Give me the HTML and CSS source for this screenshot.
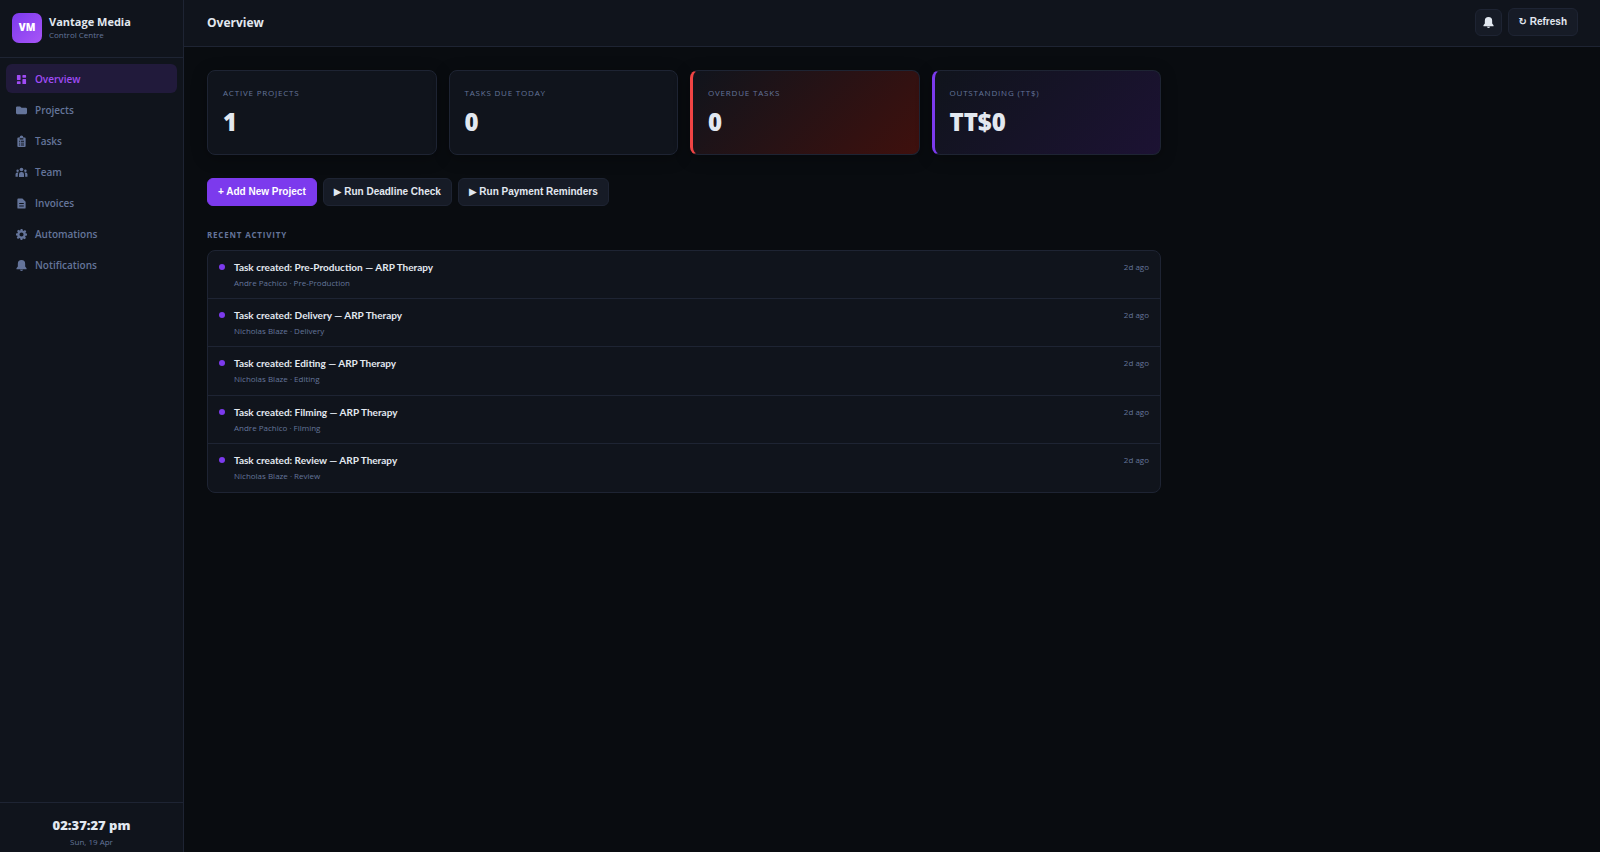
FILE: index.html
```html
<!DOCTYPE html>
<html lang="en">
<head>
<meta charset="utf-8">
<meta name="viewport" content="width=device-width, initial-scale=1">
<title>Vantage Media – Control Centre</title>
<link rel="stylesheet" href="styles.css">
</head>
<body>
<div class="app">
  <aside class="sidebar">
    <div class="brand">
      <div class="brand-logo">VM</div>
      <div class="brand-text">
        <div class="brand-name">Vantage Media</div>
        <div class="brand-sub">Control Centre</div>
      </div>
    </div>
    <nav class="nav">
      <a class="nav-item active" href="#overview"><svg class="icon" viewBox="0 0 24 24"><path d="M3 2h6a1 1 0 0 1 1 1v9a1 1 0 0 1-1 1H3a1 1 0 0 1-1-1V3a1 1 0 0 1 1-1zM15 2h6a1 1 0 0 1 1 1v4a1 1 0 0 1-1 1h-6a1 1 0 0 1-1-1V3a1 1 0 0 1 1-1zM15 11h6a1 1 0 0 1 1 1v9a1 1 0 0 1-1 1h-6a1 1 0 0 1-1-1v-9a1 1 0 0 1 1-1zM3 16h6a1 1 0 0 1 1 1v4a1 1 0 0 1-1 1H3a1 1 0 0 1-1-1v-4a1 1 0 0 1 1-1z"/></svg>Overview</a>
      <a class="nav-item" href="#projects"><svg class="icon" viewBox="0 0 24 24"><path d="M2.500 3H9l3 3h9.500A2.500 2.500 0 0 1 24 8.500v9a2.500 2.500 0 0 1-2.500 2.500h-19A2.500 2.500 0 0 1 0 17.500v-12A2.500 2.500 0 0 1 2.500 3z"/></svg>Projects</a>
      <a class="nav-item" href="#tasks"><svg class="icon" viewBox="0 0 24 24"><path fill-rule="evenodd" d="M5 3h3a4 4 0 0 1 8 0h3a2 2 0 0 1 2 2v17a2 2 0 0 1-2 2H5a2 2 0 0 1-2-2V5a2 2 0 0 1 2-2zM8 5v2.500h8V5zM6.500 10.500v2h2v-2zM10.500 10.500v2h7v-2zM6.500 14.500v2h2v-2zM10.500 14.500v2h7v-2zM6.500 18.500v2h2v-2zM10.500 18.500v2h7v-2z"/></svg>Tasks</a>
      <a class="nav-item" href="#team"><svg class="icon" viewBox="0 0 24 24"><circle cx="12" cy="5.500" r="4"/><circle cx="3.500" cy="8" r="2.700"/><circle cx="20.500" cy="8" r="2.700"/><path d="M6.500 22v-6a5 5 0 0 1 5-5h1a5 5 0 0 1 5 5v6zM-1 21v-5a4 4 0 0 1 4-4h2.500q-1.500 2-1.500 4v5zM25 21v-5a4 4 0 0 0-4-4h-2.500q1.500 2 1.500 4v5z"/></svg>Team</a>
      <a class="nav-item" href="#invoices"><svg class="icon" viewBox="0 0 24 24"><path fill-rule="evenodd" d="M5 1h9l7 7v13a2 2 0 0 1-2 2H5a2 2 0 0 1-2-2V3a2 2 0 0 1 2-2zM7 11v2h10v-2zM7 16.500v2h10v-2z"/></svg>Invoices</a>
      <a class="nav-item" href="#automations"><svg class="icon" viewBox="0 0 24 24"><path fill-rule="evenodd" d="M10 0h4l.8 3.300 1.800.8 3-1.800 2.800 2.800-1.800 3 .8 1.800L24 10v4l-3.300.8-.8 1.800 1.800 3-2.800 2.800-3-1.800-1.800.8L14 24h-4l-.8-3.300-1.800-.8-3 1.800-2.800-2.800 1.800-3-.8-1.800L0 14v-4l3.300-.8.8-1.800-1.800-3 2.800-2.800 3 1.800 1.800-.8zM12 7.500a4.500 4.500 0 1 0 0 9 4.500 4.500 0 0 0 0-9z"/></svg>Automations</a>
      <a class="nav-item" href="#notifications"><svg class="icon" viewBox="0 0 24 24"><path d="M12 0a8 8 0 0 1 8 8v6l3 4v2H1v-2l3-4V8a8 8 0 0 1 8-8zM8.500 21.500h7a3.500 2.500 0 0 1-7 0z"/></svg>Notifications</a>
    </nav>
    <div class="clock">
      <div class="clock-time">02:37:27 pm</div>
      <div class="clock-date">Sun, 19 Apr</div>
    </div>
  </aside>
  <div class="main">
    <header class="topbar">
      <h1 class="page-title">Overview</h1>
      <div class="topbar-actions">
        <button class="icon-btn" type="button" aria-label="Notifications"><svg class="icon" viewBox="0 0 24 24"><path d="M12 0a8 8 0 0 1 8 8v6l3 4v2H1v-2l3-4V8a8 8 0 0 1 8-8zM8.500 21.500h7a3.500 2.500 0 0 1-7 0z"/></svg></button>
        <button class="btn" type="button">↻ Refresh</button>
      </div>
    </header>
    <main class="content">
      <section class="stats">
        <div class="card"><div class="card-label">Active Projects</div><div class="card-value">1</div></div>
        <div class="card"><div class="card-label">Tasks Due Today</div><div class="card-value">0</div></div>
        <div class="card card-danger"><div class="card-label">Overdue Tasks</div><div class="card-value">0</div></div>
        <div class="card card-accent"><div class="card-label">Outstanding (TT$)</div><div class="card-value">TT$0</div></div>
      </section>
      <div class="actions">
        <button class="btn btn-primary" type="button">+ Add New Project</button>
        <button class="btn" type="button">▶ Run Deadline Check</button>
        <button class="btn" type="button">▶ Run Payment Reminders</button>
      </div>
      <h2 class="section-title">Recent Activity</h2>
      <ul class="activity">
        <li class="activity-row"><span class="dot"></span><div class="activity-body"><div class="activity-title">Task created: Pre-Production — ARP Therapy</div><div class="activity-meta">Andre Pachico · Pre-Production</div></div><time class="activity-time">2d ago</time></li>
        <li class="activity-row"><span class="dot"></span><div class="activity-body"><div class="activity-title">Task created: Delivery — ARP Therapy</div><div class="activity-meta">Nicholas Blaze · Delivery</div></div><time class="activity-time">2d ago</time></li>
        <li class="activity-row"><span class="dot"></span><div class="activity-body"><div class="activity-title">Task created: Editing — ARP Therapy</div><div class="activity-meta">Nicholas Blaze · Editing</div></div><time class="activity-time">2d ago</time></li>
        <li class="activity-row"><span class="dot"></span><div class="activity-body"><div class="activity-title">Task created: Filming — ARP Therapy</div><div class="activity-meta">Andre Pachico · Filming</div></div><time class="activity-time">2d ago</time></li>
        <li class="activity-row"><span class="dot"></span><div class="activity-body"><div class="activity-title">Task created: Review — ARP Therapy</div><div class="activity-meta">Nicholas Blaze · Review</div></div><time class="activity-time">2d ago</time></li>
      </ul>
    </main>
  </div>
</div>
</body>
</html>
```
FILE: styles.css
```css
:root {
  --bg: #090c10;
  --surface: #10141c;
  --raised: #161b26;
  --border: #1e2433;
  --text: #e2e8f0;
  --muted: #64749a;
  --accent: #7c3aed;
  --accent-light: #a04bf5;
  --danger: #ef4444;
}

* { box-sizing: border-box; }

body {
  margin: 0;
  background: var(--bg);
  color: var(--text);
  font-family: "Open Sans", "Noto Sans", sans-serif;
  font-size: 11px;
  line-height: 16px;
}

.app { display: flex; min-height: 100vh; }

.icon { width: 11px; height: 11px; fill: currentColor; flex: none; overflow: visible; }

.sidebar {
  display: flex;
  flex-direction: column;
  flex: none;
  width: 184px;
  background: var(--surface);
  border-right: 1px solid var(--border);
}

.brand {
  display: flex;
  align-items: center;
  gap: 7px;
  padding: 13px 12px 14px;
  border-bottom: 1px solid var(--border);
}

.brand-logo {
  width: 30px;
  height: 30px;
  border-radius: 7px;
  background: linear-gradient(135deg, #7c3aed, #a855f7);
  color: #fff;
  font-size: 10px;
  font-weight: 800;
  line-height: 28px;
  text-align: center;
}

.brand-text { padding-bottom: 1px; }
.brand-name { font-size: 11px; font-weight: 700; line-height: 15px; }
.brand-sub { color: var(--muted); font-size: 8px; line-height: 12px; }

.nav {
  display: flex;
  flex: 1;
  flex-direction: column;
  gap: 2px;
  padding: 6px;
}

.nav-item {
  display: flex;
  align-items: center;
  gap: 8px;
  height: 29px;
  padding: 1px 10px 0;
  border-radius: 6px;
  color: var(--muted);
  font-size: 10px;
  font-weight: 600;
  text-decoration: none;
}

.nav-item.active { background: #211a3b; color: var(--accent-light); }

.clock {
  padding: 11px 12px 4px;
  border-top: 1px solid var(--border);
  text-align: center;
}

.clock-time { font-size: 13px; font-weight: 800; line-height: 22px; }
.clock-date { color: var(--muted); font-size: 8px; line-height: 12px; }

.main { flex: 1; min-width: 0; }

.topbar {
  display: flex;
  align-items: center;
  justify-content: space-between;
  padding: 8px 22px 10px 23px;
  background: var(--surface);
  border-bottom: 1px solid var(--border);
}

.page-title { margin: 0; padding-top: 2px; font-size: 12px; font-weight: 700; line-height: 20px; }

.topbar-actions { display: flex; align-items: center; gap: 6px; }

.btn, .icon-btn {
  border: 1px solid var(--border);
  border-radius: 6px;
  background: var(--raised);
  color: var(--text);
}

.btn {
  padding: 6px 10px;
  font: bold 10px/14px "Liberation Sans", "DejaVu Sans", sans-serif;
}

.icon-btn {
  display: flex;
  align-items: center;
  justify-content: center;
  width: 27px;
  height: 27px;
  padding: 0;
}

.btn-primary { border-color: var(--accent); background: var(--accent); color: #fff; }

.content { max-width: 1000px; padding: 23px; }

.stats { display: grid; grid-template-columns: repeat(4, 1fr); gap: 12px; }

.card {
  padding: 16px 15px;
  border: 1px solid var(--border);
  border-radius: 8px;
  background: var(--surface);
  box-shadow: 0 3px 16px rgba(0, 0, 0, 0.3);
}

.card-label {
  color: var(--muted);
  font-size: 8px;
  letter-spacing: 0.1em;
  line-height: 12px;
  text-transform: uppercase;
}

.card-value { margin-top: 7px; font-size: 24px; font-weight: 800; line-height: 32px; }

.card-danger {
  border-left: 3px solid var(--danger);
  background: linear-gradient(135deg, var(--surface), #3f100d);
}

.card-accent {
  border-left: 3px solid var(--accent);
  background: linear-gradient(135deg, var(--surface), #1c1233);
}

.actions { display: flex; flex-wrap: wrap; gap: 6px; margin-top: 23px; }

.section-title {
  margin: 23px 0 9px;
  color: var(--muted);
  font-size: 8px;
  font-weight: 700;
  letter-spacing: 0.1em;
  line-height: 12px;
  text-transform: uppercase;
}

.activity {
  display: grid;
  grid-auto-rows: 1fr;
  min-height: 243px;
  margin: 0;
  padding: 0;
  border: 1px solid var(--border);
  border-radius: 8px;
  background: var(--surface);
  list-style: none;
}

.activity-row {
  display: flex;
  align-items: flex-start;
  gap: 9px;
  padding: 8px 11px 6px;
  border-bottom: 1px solid var(--border);
}

.activity-row:last-child { border-bottom: 0; }

.dot {
  flex: none;
  width: 6px;
  height: 6px;
  margin-top: 5px;
  border-radius: 50%;
  background: var(--accent);
}

.activity-body { flex: 1; }
.activity-title { font-family: Lato, "Open Sans", sans-serif; font-size: 10px; font-weight: 700; line-height: 17px; }
.activity-meta { color: var(--muted); font-size: 8px; line-height: 14px; }
.activity-time { color: var(--muted); font-size: 8px; line-height: 15px; }
```
